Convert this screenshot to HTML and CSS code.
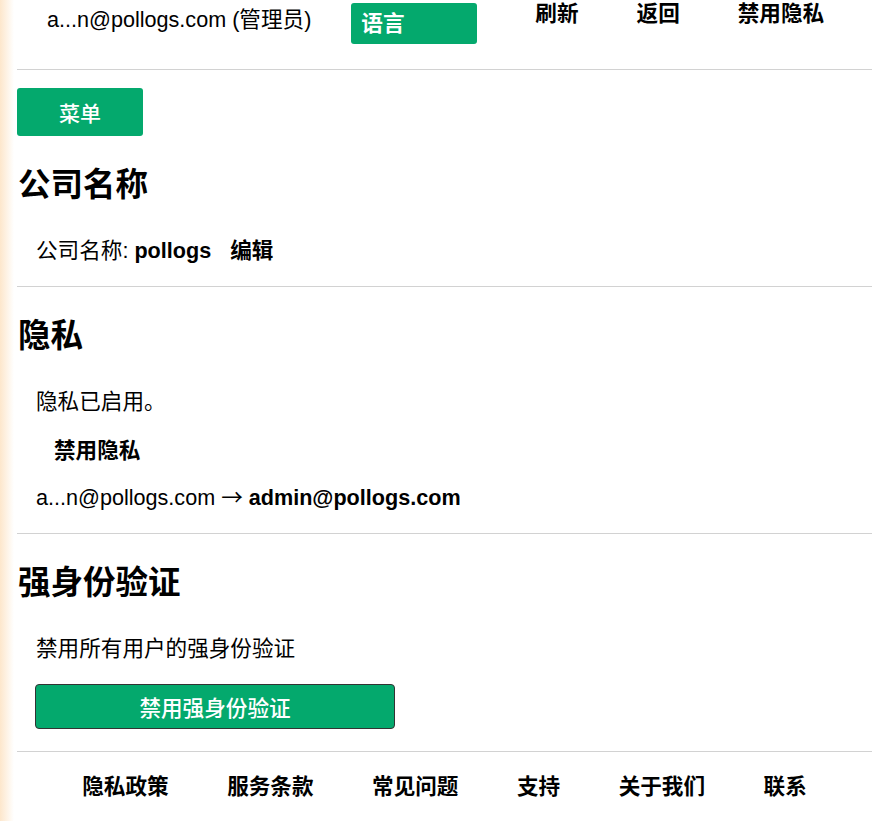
FILE: index.html
```html
<!DOCTYPE html>
<html lang="zh-CN">
<head>
<meta charset="UTF-8" />
<meta name="viewport" content="width=device-width, initial-scale=1" />
<title>公司设置</title>
<link rel="stylesheet" href="styles.css">
</head>
<body>

<div class="page">
  <header class="topbar">
    <span class="user">a...n@pollogs.com (管理员)</span>
    <button class="lang-btn" type="button">语言</button>
    <nav class="top-links">
      <a href="#">刷新</a>
      <a href="#">返回</a>
      <a href="#">禁用隐私</a>
    </nav>
  </header>

  <hr />

  <button class="menu-btn" type="button">菜单</button>

  <section class="block">
    <h2>公司名称</h2>
    <p class="line">公司名称: <b>pollogs</b> <a class="edit" href="#">编辑</a></p>
  </section>

  <hr />

  <section class="block">
    <h2>隐私</h2>
    <p class="line">隐私已启用。</p>
    <p class="line sub"><a href="#">禁用隐私</a></p>
    <p class="line mail">a...n@pollogs.com <span class="arrow">→</span> <b>admin@pollogs.com</b></p>
  </section>

  <hr />

  <section class="block">
    <h2>强身份验证</h2>
    <p class="line">禁用所有用户的强身份验证</p>
    <button class="wide-btn" type="button">禁用强身份验证</button>
  </section>

  <hr />

  <footer class="footer">
    <a href="#">隐私政策</a>
    <a href="#">服务条款</a>
    <a href="#">常见问题</a>
    <a href="#">支持</a>
    <a href="#">关于我们</a>
    <a href="#">联系</a>
  </footer>
</div>

</body>
</html>
```

FILE: styles.css
```css
body {
  margin: 0;
  font-family: 'Liberation Sans', 'Noto Sans CJK SC', sans-serif;
  font-size: 21.6px;
  line-height: 26px;
  color: #000;
  background: linear-gradient(90deg, #fde7cc 0, #fff 14px);
  min-height: 821px;
}
a {
  color: #000;
  text-decoration: none;
  font-weight: 700;
}
.page {
  padding: 0 17px;
}
hr {
  border: none;
  border-top: 1px solid #d2d2d2;
  margin: 0;
}
.topbar {
  display: flex;
  align-items: flex-start;
  height: 69px;
  padding-left: 30px;
}
.user {
  margin-top: 7px;
  margin-right: 40px;
  white-space: nowrap;
}
.lang-btn {
  margin-top: 3px;
  width: 126px;
  height: 41px;
  padding: 0 10px 4px;
  text-align: left;
  font: 700 21.6px 'Liberation Sans', 'Noto Sans CJK SC', sans-serif;
  color: #fff;
  background: #04a96d;
  border: none;
  border-radius: 3px;
}
.top-links {
  display: flex;
  gap: 58px;
  margin-left: 58px;
  margin-top: 1px;
}
.menu-btn {
  display: block;
  margin-top: 18px;
  width: 126px;
  height: 48px;
  font: 500 21px 'Liberation Sans', 'Noto Sans CJK SC', sans-serif;
  color: #fff;
  background: #04a96d;
  border: none;
  border-radius: 3px;
}
.block {
  padding-bottom: 22px;
}
h2 {
  margin: 29px 0 0 1px;
  font-size: 32.5px;
  line-height: 40px;
  font-weight: 700;
}
.block h2 + .line {
  margin-top: 33px;
}
.line {
  margin: 23px 0 0 19px;
}
.line.sub {
  margin-left: 37px;
}
.line.mail {
  margin-top: 21px;
}
.arrow {
  font-family: 'Noto Sans CJK SC', sans-serif;
  line-height: 0;
}
.edit {
  margin-left: 13px;
}
.wide-btn {
  display: block;
  margin: 22px 0 0 18px;
  width: 360px;
  height: 45px;
  font: 500 21.6px 'Liberation Sans', 'Noto Sans CJK SC', sans-serif;
  color: #fff;
  background: #04a96d;
  border: 1px solid #333;
  border-radius: 4px;
}
.footer {
  display: flex;
  justify-content: center;
  gap: 58.5px;
  padding-top: 22px;
}
```
